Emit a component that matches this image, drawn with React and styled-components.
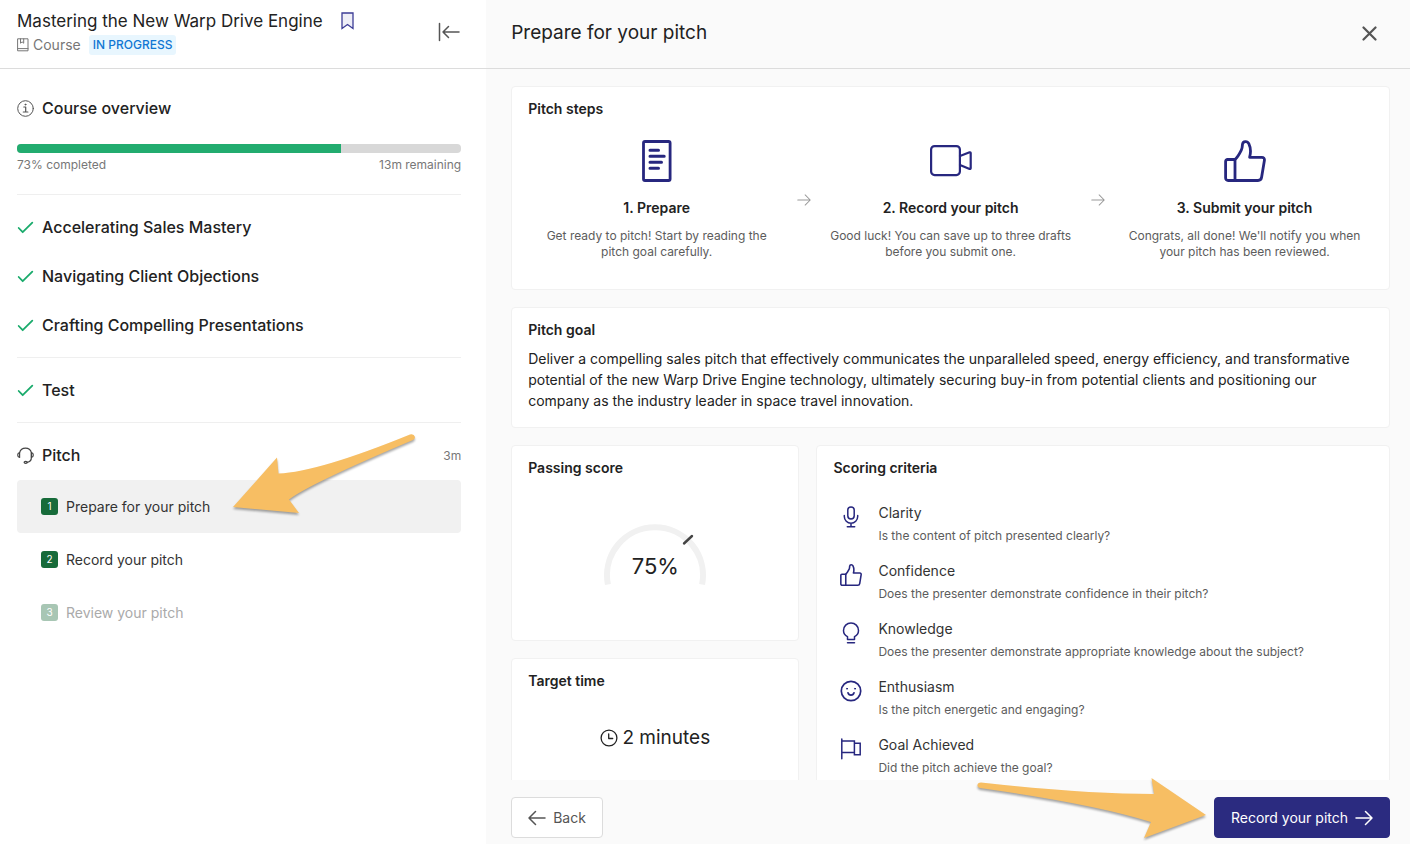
import React, { useState } from "react";
import styled, { createGlobalStyle } from "styled-components";

//STYLES
const GlobalStyle = createGlobalStyle`
  * {
    box-sizing: border-box;
  }
  body {
    margin: 0;
    font-family: Inter, "Liberation Sans", sans-serif;
    font-size: 14px;
    color: #222;
    background: #fff;
  }
  h1, h2, h3, p, ul, ol {
    margin: 0;
    padding: 0;
    font-weight: 400;
  }
  ul, ol {
    list-style: none;
  }
  button {
    font-family: inherit;
    cursor: pointer;
  }
  svg {
    display: block;
    flex-shrink: 0;
  }
`;

const Page = styled.div`
  display: grid;
  grid-template-columns: 10fr 19fr;
  height: 100vh;
`;

const Sidebar = styled.aside`
  display: flex;
  flex-direction: column;
  min-width: 0;
  background: #fff;
`;

const SideHeader = styled.header`
  display: flex;
  align-items: center;
  justify-content: space-between;
  height: 69px;
  padding: 0 26px 5px 17px;
  border-bottom: 1px solid #dcdcdc;
`;

const TitleLine = styled.div`
  display: flex;
  align-items: center;
  gap: 18px;
`;

const CourseTitle = styled.h1`
  font-size: 17px;
  line-height: 24px;
`;

const MetaLine = styled.div`
  display: flex;
  align-items: center;
  gap: 4px;
  margin-top: 2px;
  color: #777;
  line-height: 20px;
`;

const Status = styled.span`
  margin-left: 4px;
  padding: 0 4px;
  border-radius: 3px;
  background: #e8f6fe;
  color: #1176d3;
  font-size: 12px;
  font-weight: 500;
`;

const IconButton = styled.button`
  display: flex;
  padding: 0;
  border: 0;
  background: none;
  color: ${(props) => props.$color || "#555"};
`;

const SideNav = styled.nav`
  padding: 7px 25px 0 17px;
`;

const Section = styled.section`
  padding: 8px 0 7px;
  border-bottom: ${(props) => (props.$last ? "0" : "1px solid #efefef")};
`;

const NavLink = styled.a`
  display: flex;
  align-items: center;
  gap: 8px;
  padding: 12px 0;
  color: #222;
  font-size: 16px;
  font-weight: 500;
  line-height: 25px;
  text-decoration: none;
`;

const Duration = styled.span`
  margin-left: auto;
  color: #777;
  font-size: 12px;
  font-weight: 400;
`;

const Track = styled.div`
  height: 9px;
  margin-top: 11px;
  border-radius: 4px;
  overflow: hidden;
  background: #d8d8d8;
`;

const Fill = styled.div`
  height: 100%;
  background: #22ac6f;
`;

const TrackLabels = styled.div`
  display: flex;
  justify-content: space-between;
  padding: 4px 0 14px;
  color: #777;
  font-size: 12px;
  line-height: 16px;
`;

const StepItem = styled.li`
  position: relative;
`;

const StepButton = styled.button`
  display: flex;
  align-items: center;
  gap: 8px;
  width: 100%;
  padding: 16px 24px;
  border: 0;
  border-radius: 4px;
  background: ${(props) => (props.$active ? "#f1f1f1" : "transparent")};
  color: #333;
  font-size: 14px;
  line-height: 21px;
  text-align: left;

  &:disabled {
    color: #aaa;
    cursor: default;
  }
`;

const StepNumber = styled.span`
  width: 17px;
  border-radius: 3px;
  background: ${(props) => (props.$muted ? "#a8c6b4" : "#176b3a")};
  color: #fff;
  font-size: 10px;
  line-height: 17px;
  text-align: center;
`;

const SideArrow = styled.svg`
  position: absolute;
  top: -52px;
  right: 40px;
  pointer-events: none;
  filter: drop-shadow(0 2px 1px rgba(0, 0, 0, 0.35));
`;

const Main = styled.main`
  display: flex;
  flex-direction: column;
  min-width: 0;
  min-height: 0;
  background: #fafafa;
`;

const MainHeader = styled.header`
  display: flex;
  align-items: center;
  justify-content: space-between;
  flex-shrink: 0;
  height: 69px;
  padding: 0 33px 2px 25px;
  border-bottom: 1px solid #dcdcdc;
`;

const MainTitle = styled.h2`
  font-size: 19px;
  line-height: 28px;
`;

const Content = styled.div`
  display: flex;
  flex: 1;
  flex-direction: column;
  gap: 17px;
  min-height: 0;
  padding: 17px 20px 17px 25px;
  overflow-y: auto;
  scrollbar-width: none;
`;

const Card = styled.section`
  padding: 12px 16px 16px;
  border: 1px solid #f1f1f1;
  border-radius: 4px;
  background: #fff;
`;

const CardTitle = styled.h3`
  font-size: 14px;
  font-weight: 600;
  line-height: 20px;
`;

const Steps = styled.div`
  display: flex;
  align-items: center;
  padding: 21px 0 13px;
`;

const Step = styled.div`
  display: flex;
  flex: 1;
  flex-direction: column;
  align-items: center;
  padding: 0 7px;
  text-align: center;
  color: #27277f;
`;

const StepTitle = styled(CardTitle)`
  margin: 16px 0 10px;
  color: #222;
`;

const Caption = styled.p`
  color: #5c5c5c;
  font-size: 12px;
  line-height: 16px;
`;

const StepGap = styled.div`
  display: flex;
  flex: 0 0 37px;
  justify-content: center;
  color: #999;
`;

const GoalText = styled.p`
  margin-top: 8px;
  font-size: 14px;
  line-height: 21px;
`;

const Columns = styled.div`
  display: grid;
  grid-template-columns: 1fr 1.99fr;
  gap: 17px;
`;

const Stack = styled.div`
  display: flex;
  flex-direction: column;
  gap: 17px;
`;

const TimeCard = styled(Card)`
  flex: 1;
`;

const Gauge = styled.div`
  display: grid;
  justify-items: center;
  padding: 45px 0 37px;

  > * {
    grid-area: 1 / 1;
  }
`;

const Score = styled.strong`
  align-self: end;
  padding-bottom: 7px;
  font-size: 22px;
  font-weight: 400;
  line-height: 28px;
`;

const Time = styled.p`
  display: flex;
  align-items: center;
  justify-content: center;
  gap: 4px;
  margin-top: 33px;
  font-size: 19px;
  line-height: 28px;
`;

const CriteriaList = styled.ul`
  display: flex;
  flex-direction: column;
  gap: 16px;
  padding: 24px 7px 0;
`;

const Criterion = styled.li`
  display: flex;
  gap: 16px;
  color: #27277f;

  > svg {
    margin-top: 4px;
  }
`;

const CriterionName = styled.h4`
  margin: 0 0 4px;
  color: #333;
  font-size: 14px;
  font-weight: 400;
  line-height: 22px;
`;

const Footer = styled.footer`
  display: flex;
  justify-content: space-between;
  flex-shrink: 0;
  padding: 17px 20px 6px 25px;
`;

const ActionWrap = styled.div`
  position: relative;
`;

const Button = styled.button`
  display: flex;
  align-items: center;
  gap: 7px;
  padding: 0 16px;
  border: 1px solid ${(props) => (props.$primary ? "#2b2b80" : "#dcdcdc")};
  border-radius: 4px;
  background: ${(props) => (props.$primary ? "#2b2b80" : "#fff")};
  color: ${(props) => (props.$primary ? "#fff" : "#555")};
  font-size: 14px;
  line-height: 39px;
`;

const FooterArrow = styled.svg`
  position: absolute;
  right: 100%;
  bottom: -6px;
  pointer-events: none;
  filter: drop-shadow(0 2px 1px rgba(0, 0, 0, 0.35));
`;

//ICONS
const Icon = ({ size = 17, height, box = "0 0 24 24", stroke = 1.5, children }) => (
  <svg
    width={size}
    height={height || size}
    viewBox={box}
    fill="none"
    stroke="currentColor"
    strokeWidth={stroke}
    strokeLinecap="round"
    strokeLinejoin="round"
    aria-hidden="true"
  >
    {children}
  </svg>
);

const BookmarkIcon = () => (
  <Icon size={13} height={18} box="0 0 13 18" stroke={1.3}>
    <path d="M1 1h11v15.5l-5.5-4-5.5 4z" fill="#eeeef7" strokeLinejoin="miter" />
  </Icon>
);

const CourseIcon = () => (
  <Icon size={12} height={14} box="0 0 12 14" stroke={1}>
    <path d="M1 .8h10v12H1zM1 10.6h10M3.5.8v4.4l1.6-1.3 1.6 1.3V.8" />
  </Icon>
);

const CollapseIcon = () => (
  <Icon size={22} height={20} box="0 0 22 20" stroke={1.5}>
    <path d="M1.5 1.5v17M21 10H5M10.5 4.5L5 10l5.5 5.5" />
  </Icon>
);

const InfoIcon = () => (
  <Icon box="0 0 17 17" stroke={1}>
    <g stroke="#555">
      <circle cx="8.5" cy="8.5" r="7.8" />
      <path d="M6.8 7h1.9v5M6.3 12h4.6" strokeWidth="1.2" />
      <circle cx="8.4" cy="4.6" r=".5" fill="#555" />
    </g>
  </Icon>
);

const CheckIcon = () => (
  <Icon box="0 0 17 17" stroke={1.8}>
    <path d="M1.7 9l4 4.2L15.3 3.7" stroke="#1aab6c" />
  </Icon>
);

const HeadsetIcon = () => (
  <Icon box="0 0 17 17" stroke={1.2}>
    <g stroke="#444">
      <path d="M2.6 5.6a6.1 6.1 0 0 1 11.8 0v5c0 2.2-1.4 4.3-4.2 4.7" />
      <path d="M2.6 5.6v4.8C1.4 10.2.7 9.3.7 8s.7-2.2 1.9-2.4zM14.4 5.6v4.8c1.2-.2 1.9-1.1 1.9-2.4s-.7-2.2-1.9-2.4z" />
      <ellipse cx="8.7" cy="15.3" rx="1.6" ry="1" />
    </g>
  </Icon>
);

const ArrowRightIcon = ({ size = 18, stroke }) => (
  <Icon size={size} box="0 0 18 18" stroke={stroke}>
    <path d="M1 9h16M10.5 2.5L17 9l-6.5 6.5" />
  </Icon>
);

const ArrowLeftIcon = () => (
  <Icon size={18} box="0 0 18 18">
    <path d="M17 9H1M7.5 2.5L1 9l6.5 6.5" />
  </Icon>
);

const CloseIcon = () => (
  <Icon size={15} box="0 0 15 15" stroke={2.2}>
    <path d="M1.5 1.5l12 12M13.5 1.5l-12 12" />
  </Icon>
);

const DocumentIcon = () => (
  <Icon size={42} box="0 0 42 42" stroke={2.8}>
    <rect x="7.5" y="1.5" width="26.6" height="39" rx="1.5" />
    <path d="M14 10.2h8.5M14 16.2h14.2M14 22.2h11.5M14 28.2h8.5" strokeWidth="3" />
  </Icon>
);

const CameraIcon = () => (
  <Icon size={42} box="0 0 42 42" stroke={2.2}>
    <rect x="1.1" y="6.1" width="28.8" height="29" rx="3.5" />
    <path d="M30 16l9.6-3.7q1.100-.2 1.100.8v15q0 1-1.100.8L30 24.900" />
  </Icon>
);

const ThumbIcon = ({ size, stroke }) => (
  <Icon size={size} box="0 0 42 42" stroke={stroke}>
    <path d="M11 19.500H3.600a2 2 0 0 0-2 2V38a2.500 2.500 0 0 0 2.500 2.500H34c2 0 3.300-1.200 3.600-3.200l2.800-16.800c.3-2-.8-3.200-2.600-3.200H25.600c1.300-4.500 1-9.800-.8-13.600-1.400-3-5.800-2.800-6.300.5-.3 2-.1 3.800-1 5.500-1.900 3.800-3.500 7.200-6.500 9.800z" />
    <path d="M11 19.500v21" />
  </Icon>
);

const MicIcon = () => (
  <Icon size={22} box="0 0 22 22">
    <rect x="7.8" y="1" width="6.4" height="12" rx="3.2" />
    <path d="M4.3 9.5v1a6.7 6.7 0 0 0 13.4 0v-1M11 17.3v3.5M7.3 20.8h7.4" />
  </Icon>
);

const BulbIcon = () => (
  <Icon size={22} box="0 0 22 22">
    <path d="M7.5 17.5v-2.9c-2.4-1.3-4-3.6-4-6.200a7.500 7.500 0 0 1 15 0c0 2.600-1.600 4.900-4 6.200v2.900zM7.500 20.800h7" />
  </Icon>
);

const SmileIcon = () => (
  <Icon size={22} box="0 0 22 22" stroke={1.7}>
    <circle cx="11" cy="11" r="9.7" />
    <path d="M8 12.8a3.100 3.100 0 0 0 6 0" />
    <circle cx="7" cy="8.7" r=".5" fill="currentColor" strokeWidth="1" />
    <circle cx="15" cy="8.7" r=".5" fill="currentColor" strokeWidth="1" />
  </Icon>
);

const FlagIcon = () => (
  <Icon size={22} box="0 0 22 22">
    <path d="M1.8 1v19.8M1.8 3h12.6v11.6H1.8M14.4 5.3h5.8v11.5h-5.8z" strokeLinejoin="miter" />
  </Icon>
);

const ClockIcon = () => (
  <Icon size={18} box="0 0 18 18" stroke={1.3}>
    <circle cx="9" cy="9" r="7.9" />
    <path d="M8.7 4.8v4.7h4" />
  </Icon>
);

//DATA
const lessons = [
  "Accelerating Sales Mastery",
  "Navigating Client Objections",
  "Crafting Compelling Presentations",
];

const pitchSteps = [
  { id: 1, name: "Prepare for your pitch" },
  { id: 2, name: "Record your pitch" },
  { id: 3, name: "Review your pitch", disabled: true },
];

const criteria = [
  { name: "Clarity", text: "Is the content of pitch presented clearly?", icon: <MicIcon /> },
  {
    name: "Confidence",
    text: "Does the presenter demonstrate confidence in their pitch?",
    icon: <ThumbIcon size={22} stroke={3} />,
  },
  {
    name: "Knowledge",
    text: "Does the presenter demonstrate appropriate knowledge about the subject?",
    icon: <BulbIcon />,
  },
  { name: "Enthusiasm", text: "Is the pitch energetic and engaging?", icon: <SmileIcon /> },
  { name: "Goal Achieved", text: "Did the pitch achieve the goal?", icon: <FlagIcon /> },
];

const Lesson = ({ icon, name, duration }) => (
  <NavLink href="#">
    {icon}
    {name}
    {duration && <Duration>{duration}</Duration>}
  </NavLink>
);

const App = () => {
  const [current, setCurrent] = useState(1);
  const progress = 73;

  return (
    <Page>
      <GlobalStyle />
      <Sidebar>
        <SideHeader>
          <div>
            <TitleLine>
              <CourseTitle>Mastering the New Warp Drive Engine</CourseTitle>
              <IconButton $color="#3d3d96" aria-label="Bookmark">
                <BookmarkIcon />
              </IconButton>
            </TitleLine>
            <MetaLine>
              <CourseIcon />
              Course
              <Status>IN PROGRESS</Status>
            </MetaLine>
          </div>
          <IconButton aria-label="Collapse menu">
            <CollapseIcon />
          </IconButton>
        </SideHeader>
        <SideNav>
          <Section>
            <Lesson icon={<InfoIcon />} name="Course overview" />
            <Track>
              <Fill style={{ width: `${progress}%` }} />
            </Track>
            <TrackLabels>
              <span>{progress}% completed</span>
              <span>13m remaining</span>
            </TrackLabels>
          </Section>
          <Section>
            {lessons.map((name) => (
              <Lesson key={name} icon={<CheckIcon />} name={name} />
            ))}
          </Section>
          <Section>
            <Lesson icon={<CheckIcon />} name="Test" />
          </Section>
          <Section $last>
            <Lesson icon={<HeadsetIcon />} name="Pitch" duration="3m" />
            <ol>
              {pitchSteps.map((step) => (
                <StepItem key={step.id}>
                  <StepButton
                    $active={step.id === current}
                    disabled={step.disabled}
                    onClick={() => setCurrent(step.id)}
                  >
                    <StepNumber $muted={step.disabled}>{step.id}</StepNumber>
                    {step.name}
                  </StepButton>
                  {step.id === current && (
                    <SideArrow width="192" height="92" viewBox="0 0 192 92" aria-hidden="true">
                      <path
                        d="M4 79L48 29.5l1.5 16Q89 44 181 6.5q4-1 5 2.5 0 2-2 3Q80 56 60 71.5L70 85z"
                        fill="#f7be63"
                      />
                    </SideArrow>
                  )}
                </StepItem>
              ))}
            </ol>
          </Section>
        </SideNav>
      </Sidebar>
      <Main>
        <MainHeader>
          <MainTitle>Prepare for your pitch</MainTitle>
          <IconButton aria-label="Close">
            <CloseIcon />
          </IconButton>
        </MainHeader>
        <Content>
          <Card>
            <CardTitle>Pitch steps</CardTitle>
            <Steps>
              <Step>
                <DocumentIcon />
                <StepTitle>1. Prepare</StepTitle>
                <Caption>Get ready to pitch! Start by reading the pitch goal carefully.</Caption>
              </Step>
              <StepGap>
                <ArrowRightIcon size={14} stroke={1.3} />
              </StepGap>
              <Step>
                <CameraIcon />
                <StepTitle>2. Record your pitch</StepTitle>
                <Caption>Good luck! You can save up to three drafts before you submit one.</Caption>
              </Step>
              <StepGap>
                <ArrowRightIcon size={14} stroke={1.3} />
              </StepGap>
              <Step>
                <ThumbIcon size={42} stroke={2.8} />
                <StepTitle>3. Submit your pitch</StepTitle>
                <Caption>Congrats, all done! We'll notify you when your pitch has been reviewed.</Caption>
              </Step>
            </Steps>
          </Card>
          <Card>
            <CardTitle>Pitch goal</CardTitle>
            <GoalText>
              Deliver a compelling sales pitch that effectively communicates the unparalleled speed,
              energy efficiency, and transformative potential of the new Warp Drive Engine technology,
              ultimately securing buy-in from potential clients and positioning our company as the
              industry leader in space travel innovation.
            </GoalText>
          </Card>
          <Columns>
            <Stack>
              <Card>
                <CardTitle>Passing score</CardTitle>
                <Gauge>
                  <svg width="104" height="64" viewBox="0 0 104 64" fill="none" aria-hidden="true">
                    <path d="M4.9 61.5A48 48 0 1 1 99.1 61.5" stroke="#f1f1f1" strokeWidth="6" />
                    <path d="M81 20.5l8-7.5" stroke="#444" strokeWidth="2.4" strokeLinecap="round" />
                  </svg>
                  <Score>75%</Score>
                </Gauge>
              </Card>
              <TimeCard>
                <CardTitle>Target time</CardTitle>
                <Time>
                  <ClockIcon />
                  2 minutes
                </Time>
              </TimeCard>
            </Stack>
            <Card>
              <CardTitle>Scoring criteria</CardTitle>
              <CriteriaList>
                {criteria.map((item) => (
                  <Criterion key={item.name}>
                    {item.icon}
                    <div>
                      <CriterionName>{item.name}</CriterionName>
                      <Caption>{item.text}</Caption>
                    </div>
                  </Criterion>
                ))}
              </CriteriaList>
            </Card>
          </Columns>
        </Content>
        <Footer>
          <Button>
            <ArrowLeftIcon />
            Back
          </Button>
          <ActionWrap>
            <FooterArrow width="240" height="70" viewBox="0 0 240 70" aria-hidden="true">
              <path
                d="M7 8.5Q110 20 180 20L177.5 4 232 41l-62 23 7-16Q120 30 6 14q-3-1-2.5-3 0-2.5 3.5-2.5z"
                fill="#f7be63"
              />
            </FooterArrow>
            <Button $primary>
              Record your pitch
              <ArrowRightIcon />
            </Button>
          </ActionWrap>
        </Footer>
      </Main>
    </Page>
  );
};

export default App;
